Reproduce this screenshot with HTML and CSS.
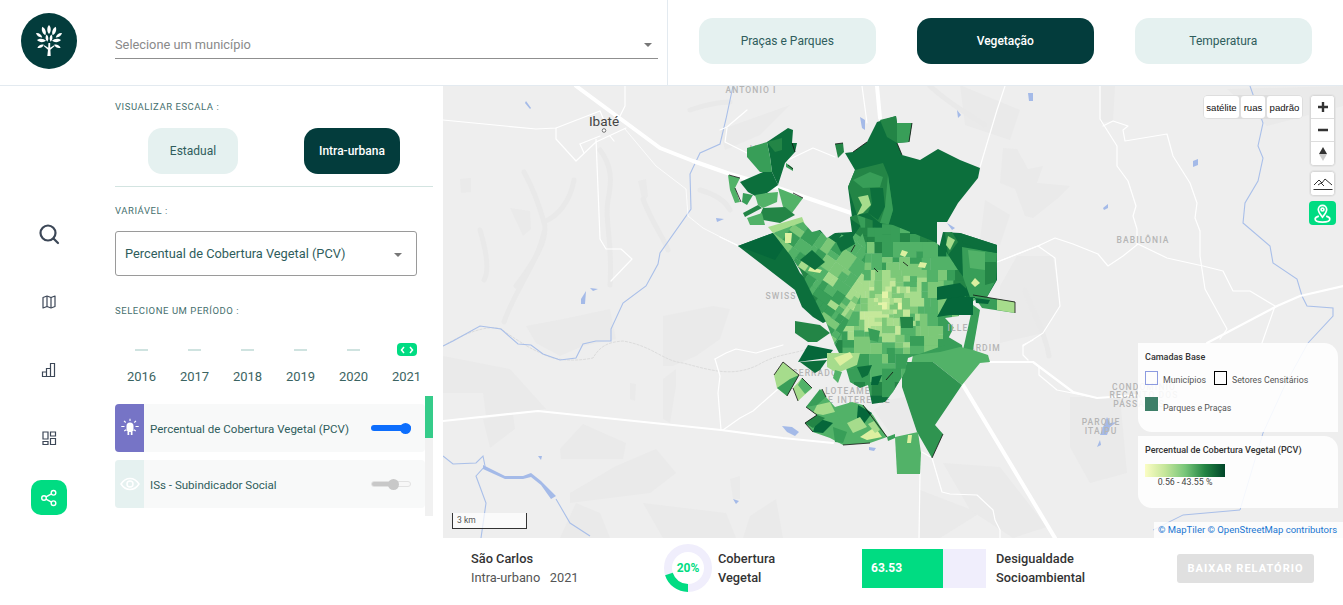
FILE: index.html
```html
<!DOCTYPE html>
<html lang="pt-BR">
<head>
<meta charset="utf-8">
<title>Vegetação - São Carlos</title>
<link rel="stylesheet" href="styles.css">
</head>
<body>
<div class="app">
  <header class="topbar">
    <div class="brand">
      <div class="logo">
        <svg viewBox="0 0 56 56" width="56" height="56" aria-hidden="true">
          <defs><path id="leaf" d="M0-5C2.300-2.500 2.300 1.500 0 4-2.300 1.500-2.300-2.500 0-5z"/></defs>
          <g fill="#fff">
            <path d="M26.300 43h3.400l-.3-6.300 4.300-3.700-.6-.8-3.900 2.600V30h-1.800l-.2 4.800-3.900-2.600-.6.8 4.300 3.700z"/>
            <use href="#leaf" transform="translate(28 17)"/>
            <use href="#leaf" transform="translate(23 18.500) rotate(-20)"/>
            <use href="#leaf" transform="translate(33 18.500) rotate(20)"/>
            <use href="#leaf" transform="translate(26 25.500) rotate(-6) scale(.8)"/>
            <use href="#leaf" transform="translate(30 25.500) rotate(6) scale(.8)"/>
            <use href="#leaf" transform="translate(18.500 22.500) rotate(-55) scale(.85)"/>
            <use href="#leaf" transform="translate(37.500 22.500) rotate(55) scale(.85)"/>
            <use href="#leaf" transform="translate(21 27.500) rotate(-85)"/>
            <use href="#leaf" transform="translate(35 27.500) rotate(85)"/>
            <use href="#leaf" transform="translate(20 33) rotate(-115) scale(.8)"/>
            <use href="#leaf" transform="translate(36 33) rotate(115) scale(.8)"/>
          </g>
        </svg>
      </div>
    </div>
    <div class="city-select">
      <span>Selecione um município</span>
      <i class="caret"></i>
    </div>
    <nav class="tabs">
      <button class="pill tab">Praças e Parques</button>
      <button class="pill tab active">Vegetação</button>
      <button class="pill tab">Temperatura</button>
    </nav>
  </header>

  <div class="content">
    <aside class="rail">
      <a class="rail-item">
        <svg width="24" height="24" viewBox="0 0 24 24" fill="none" stroke="#3c4757" stroke-width="2.200" stroke-linecap="round"><circle cx="11" cy="11" r="7.500"/><path d="M16.500 16.500 21 21"/></svg>
      </a>
      <a class="rail-item">
        <svg width="16" height="16" viewBox="0 0 16 16" fill="none" stroke="#3c4757" stroke-width="1.200" stroke-linejoin="round"><path d="M2 3.500 6 2l4 1.500L14 2v10.500L10 14l-4-1.500L2 14z"/><path d="M6 2v10.500M10 3.500V14"/></svg>
      </a>
      <a class="rail-item">
        <svg width="16" height="16" viewBox="0 0 16 16" fill="none" stroke="#3c4757" stroke-width="1.200"><path d="M1.500 10h4v4.500h-4zM5.500 6.500h4v8h-4zM9.500 1.500h4v13h-4z"/></svg>
      </a>
      <a class="rail-item">
        <svg width="16" height="16" viewBox="0 0 16 16" fill="none" stroke="#3c4757" stroke-width="1.200"><path d="M2 2h5v7H2zM9.500 2h5v4h-5zM2 11.500h5v3H2zM9.500 8.500h5v6h-5z"/></svg>
      </a>
      <a class="share-btn">
        <svg width="18" height="18" viewBox="0 0 18 18" fill="none" stroke="#fff" stroke-width="1.400"><circle cx="13.500" cy="3.800" r="2.300"/><circle cx="4" cy="9" r="2.300"/><circle cx="13.500" cy="14.200" r="2.300"/><path d="M6 7.900 11.500 4.900M6 10.100l5.500 3"/></svg>
      </a>
    </aside>

    <section class="panel">
      <h4 class="label first">VISUALIZAR ESCALA :</h4>
      <div class="scale-row">
        <button class="pill scale">Estadual</button>
        <button class="pill scale wide active">Intra-urbana</button>
      </div>
      <hr class="rule">
      <h4 class="label var">VARIÁVEL :</h4>
      <div class="var-select">
        <span>Percentual de Cobertura Vegetal (PCV)</span>
        <i class="caret"></i>
      </div>
      <h4 class="label period">SELECIONE UM PERÍODO :</h4>
      <div class="timeline">
        <div class="year"><i class="tick"></i><span>2016</span></div>
        <div class="year"><i class="tick"></i><span>2017</span></div>
        <div class="year"><i class="tick"></i><span>2018</span></div>
        <div class="year"><i class="tick"></i><span>2019</span></div>
        <div class="year"><i class="tick"></i><span>2020</span></div>
        <div class="year">
          <i class="chip"><svg width="14" height="8" viewBox="0 0 14 8" fill="none" stroke="#fff" stroke-width="1.500"><path d="M4 1 1.500 4 4 7M10 1l2.500 3L10 7"/></svg></i>
          <span>2021</span>
        </div>
      </div>
      <div class="layers">
        <div class="layer-list">
          <div class="layer">
            <div class="layer-icon bulb">
              <svg width="20" height="20" viewBox="0 0 20 20" fill="#fff"><path d="M6.500 8a3.500 3.500 0 0 1 7 0v5h-1v4h-1.700v-3H9.200v3H7.500v-4h-1z"/><path d="M10 .8V3M4 2.800l1.700 1.700M16 2.800l-1.700 1.700M1.300 8.500h3.200M15.500 8.500h3.200M4.300 13l1.700-1.300M15.700 13 14 11.700" stroke="#fff" stroke-width="1.100" fill="none"/></svg>
            </div>
            <span class="layer-name">Percentual de Cobertura Vegetal (PCV)</span>
            <div class="toggle on"><i></i></div>
          </div>
          <div class="layer">
            <div class="layer-icon eye">
              <svg width="20" height="14" viewBox="0 0 20 14" fill="none" stroke="#fff" stroke-width="1.500"><path d="M1 7c2.500-3.800 5.500-5.500 9-5.500s6.500 1.700 9 5.500c-2.500 3.800-5.500 5.500-9 5.500S3.500 10.800 1 7z"/><circle cx="10" cy="7" r="3"/></svg>
            </div>
            <span class="layer-name">ISs - Subindicador Social</span>
            <div class="toggle off"><i></i></div>
          </div>
        </div>
        <div class="scrollbar"><i></i></div>
      </div>
    </section>

    <main class="stage">
      <div class="map">
        <svg class="basemap" viewBox="443 86 900 452" preserveAspectRatio="none" aria-hidden="true">
          <rect class="land" x="443" y="86" width="900" height="452"/>
          <g class="terrain">
            <polygon points="563,319 610,309 616,339 583,346 560,356 536,343 526,326"/>
            <polygon points="443,356 510,369 546,409 486,416 483,393 443,393"/>
            <polygon points="483,419 513,414 515,429 490,448"/>
            <polygon points="583,424 626,443 623,459 561,459 560,449"/>
            <polygon points="616,466 656,449 676,473 650,493 570,503 570,493"/>
            <polygon points="576,503 600,513 610,538 560,538"/>
            <polygon points="643,503 726,513 736,538 663,538"/>
            <polygon points="730,479 740,476 740,499 733,499"/>
            <polygon points="750,516 776,499 783,538 743,538"/>
            <polygon points="663,316 713,306 730,309 720,339 696,356 673,366 663,366"/>
            <polygon points="630,383 636,384 635,401 630,399"/>
            <polygon points="663,379 676,369 676,386 670,423 663,419"/>
            <polygon points="510,208 530,211 531,229 523,236"/>
            <polygon points="460,179 471,178 471,192 461,193"/>
            <polygon points="638,181 646,179 648,196 643,203"/>
            <polygon points="1003,148 1017,149 1028,169 1043,166 1037,183 1070,186 1057,199 1033,218 1025,216 1015,189 1000,183"/>
            <polygon points="1100,86 1115,86 1113,121 1100,123"/>
            <polygon points="1227,89 1343,86 1343,106 1267,126"/>
            <polygon points="1017,256 1053,256 1060,306 1043,333 1000,343 1000,286"/>
            <polygon points="1070,397 1120,397 1127,473 1090,483 1070,447"/>
            <polygon points="920,490 980,513 940,538 920,538"/>
            <polygon points="943,463 1000,467 1047,527 1013,538 970,510"/>
            <polygon points="888,400 905,397 917,432 893,437 874,410"/>
            <polygon points="960,85 1020,110 1010,140 965,125"/>
            <polygon points="720,130 790,105 760,135 725,150"/>
            <polygon points="985,200 1010,215 1000,245 980,240"/>
          </g>
          <g class="valleys">
            <path d="M524 172C534 190 539 205 544 222S534 262 516 286"/>
            <path d="M544 222C558 216 570 202 574 180"/>
            <path d="M544 232C538 262 514 292 504 322"/>
            <path d="M643 199C653 225 665 240 668 250"/>
            <path d="M600 150C612 166 612 180 608 200S613 240 610 285"/>
            <path d="M700 190C714 194 725 200 730 210"/>
            <path d="M690 110C702 106 716 102 730 102"/>
            <path d="M1025 290C1031 310 1045 330 1049 356"/>
            <path d="M480 230C486 250 490 270 484 280"/>
            <path d="M930 86C945 100 960 110 985 125"/>
          </g>
          <path class="boundary" d="M443 346C463 334 488 324 501 329C521 343 531 349 543 354C553 360 573 362 593 358C601 344 611 342 623 341C653 346 663 361 683 363C713 371 733 377 758 365C778 353 793 355 813 347"/>
          <g class="water-line">
            <polyline points="733,86 726,119 720,144 700,153 690,174 691,209 660,253 658,264 646,286 623,303 611,329 611,341 596,341 583,344 576,358 560,360 543,354 531,345 518,344 501,329 480,326 453,341 443,346"/>
            <polyline points="443,456 453,464 476,463 483,456 485,466 476,476 486,503 481,538"/>
            <polyline points="556,499 570,523 590,536"/>
            <polyline points="1250,86 1263,123 1258,146 1263,158 1258,181 1245,203 1243,223 1270,246 1273,263 1297,279 1302,296 1307,306 1333,308 1333,316 1308,343"/>
          </g>
          <polyline class="water-faint" points="1308,343 1285,385 1263,433 1240,510 1183,515 1153,530"/>
          <g class="water">
            <polygon points="483,465 505,476 523,476 531,473 541,481 556,496 551,499 541,485 531,477 523,479 505,479 483,469"/>
            <polygon points="526,101 531,108 530,109 525,103"/>
            <polygon points="581,299 586,291 585,304 581,304"/>
            <polygon points="590,288 598,289 593,291"/>
            <polygon points="538,456 542,456 541,460"/>
            <polygon points="733,499 739,501 736,504"/>
            <polygon points="716,218 724,219 717,222"/>
            <polygon points="782,426 792,427 799,432 795,436 787,432"/>
            <polygon points="869,447 876,448 874,451 869,450"/>
            <polygon points="860,117 865,120 865,130 862,128"/>
            <polygon points="957,110 961,115 958,118"/>
            <polygon points="947,223 955,228 952,230"/>
            <polygon points="1028,93 1033,93 1033,101 1029,101"/>
            <polygon points="1193,161 1198,159 1198,165 1193,167"/>
            <polygon points="1103,208 1108,204 1108,208 1104,210"/>
            <polygon points="1107,417 1110,423 1117,422 1110,427 1107,435 1100,435"/>
            <polygon points="1100,440 1101,445 1097,447"/>
          </g>
          <g class="road major">
            <polyline points="576,86 660,148 693,161 730,174 778,188 857,215"/>
            <polyline points="963,385 1055,538"/>
            <polyline points="877,86 880,118"/>
          </g>
          <g class="road medium">
            <polyline points="443,421 538,411 721,430 783,438 833,443"/>
            <polyline points="990,362 1033,362 1073,392 1097,398 1140,395"/>
            <polyline points="1207,343 1277,306 1300,296 1343,286"/>
          </g>
          <g class="road minor">
            <polyline points="443,120 536,129 556,128 600,111"/>
            <polyline points="556,128 556,139 576,161 596,142 626,128"/>
            <polyline points="580,144 600,136"/>
            <polyline points="580,144 584,153"/>
            <polyline points="596,139 600,239 606,249 621,249 632,259 611,281"/>
            <polyline points="625,86 625,106 620,116"/>
            <polyline points="600,111 606,125"/>
            <polyline points="610,136 614,141"/>
            <polyline points="1039,367 1039,375 1057,390 1097,398"/>
            <polyline points="1033,340 1023,345 1023,355 1028,360"/>
            <polyline points="922,452 932,458 942,492 950,494 977,495 993,510 995,520 1000,530 1000,538"/>
            <polyline points="920,473 919,538"/>
            <polyline points="715,359 720,376 718,393 721,430"/>
            <polyline points="715,359 726,353 736,349 756,353 783,345"/>
            <polyline points="723,430 740,418 753,411 778,389"/>
            <polyline points="862,86 867,123"/>
            <polyline points="980,167 997,110 1005,86"/>
            <polyline points="997,262 1040,245"/>
            <polyline points="720,130 727,127 747,110"/>
            <polyline points="727,128 725,142 747,153"/>
            <polyline points="788,160 813,148 835,157"/>
            <polyline points="720,237 737,245"/>
            <polyline points="1000,261 1038,246 1055,238 1073,244 1098,254 1108,266 1123,256 1138,244 1167,258 1203,266 1223,271 1233,291 1250,291 1275,306"/>
            <polyline points="1100,86 1100,119 1117,146 1117,166 1128,181 1136,206 1133,216 1137,229 1137,244"/>
            <polyline points="1103,126 1113,121 1128,126 1123,130 1125,141 1167,134 1173,156 1190,183 1197,203 1195,218 1200,231 1200,256 1205,289 1227,329 1220,339"/>
            <polyline points="1038,246 1055,258 1060,306 1043,333 1023,346"/>
            <polyline points="1275,306 1262,343"/>
          </g>
          <polyline class="road-thin" points="625,129 656,166 686,189 688,216 703,228 738,246"/>
          <circle class="place-dot" cx="604" cy="130.500" r="1.800"/>
          <text class="place" x="604" y="126">Ibaté</text>
          <text class="hood" x="751" y="93">ANTONIO I</text>
          <text class="hood" x="766" y="152">JARDIM</text>
          <text class="hood" x="781" y="299">SWISS</text>
          <text class="hood" x="1143" y="243">BABILÔNIA</text>
          <text class="hood" x="1101" y="425">PARQUE</text>
          <text class="hood" x="1101" y="434">ITAIPU</text>
          <text class="hood" x="1144" y="390">CONDOMÍNIO</text>
          <text class="hood" x="1144" y="398">RECANTO DOS</text>
          <text class="hood" x="1139" y="407">PÁSSAROS</text>
          <text class="hood" x="858" y="394">LOTEAMENTO</text>
          <text class="hood" x="856" y="403">DE INTERESSE</text>
          <text class="hood" x="815" y="376">CERRADO</text>
          <text class="hood" x="982" y="351">JARDIM</text>

          <g class="tract-base">
            <polygon class="c1" points="867,142 877,122 896,116 897,123 912,123 909,142 897,143 902,155 920,160 938,149 960,160 980,168 978,178 958,203 947,222 937,222 937,242 935,255 855,240 848,187 855,170 845,153 853,152"/>
            <polygon class="c2" points="880,120 896,116 897,123 897,143 887,137"/>
            <polygon class="c3" points="897,123 912,123 909,142 897,143"/>
            <polygon class="c2" points="835,144 843,143 844,152 838,158"/>
            <polygon class="c2" points="848,187 855,170 883,163 888,175 893,210 887,230 880,223 868,213 857,215"/>
            <polygon class="c3" points="853,180 870,172 883,177 880,187 863,188"/>
            <polygon class="c1" points="870,188 883,188 885,207 878,220 868,213 872,203"/>
            <polygon class="c5" points="858,197 868,195 871,205 863,213 857,215 862,205"/>
            <polygon class="c3" points="888,175 893,210 887,230 880,223 885,207"/>

            <polygon class="c1" points="767,142 788,128 793,130 792,143 797,143 795,152 785,163 778,185 772,172 770,157"/>
            <polygon class="c2" points="767,142 782,138 782,150 775,152"/>
            <polygon class="c3" points="747,148 767,142 770,157 772,172 760,172 747,157"/>
            <polygon class="c1" points="740,182 763,172 772,172 778,185 767,193 757,197 748,192"/>
            <polygon class="c4" points="728,175 740,178 735,188 740,202 735,203 730,190"/>
            <polygon class="c3" points="743,193 753,195 747,205 742,202"/>
            <polygon class="c4" points="755,195 767,193 778,192 777,202 763,208 758,205"/>
            <polygon class="c4" points="778,188 803,198 792,213 783,207"/>
            <polygon class="c2" points="763,208 785,207 795,215 780,223 763,220 760,215"/>
            <polygon class="c2" points="743,213 758,205 762,208 745,217"/>
            <polygon class="c4" points="747,218 762,213 765,225 750,225"/>
            <polygon class="c5" points="768,227 802,217 805,225 773,233"/>
            <polygon class="c3" points="786,163 793,168 793,171 786,167"/>

            <polygon class="c1" points="738,246 773,233 787,242 792,257 800,273 815,287 837,290 845,292 850,310 823,323 813,317 802,307 795,290"/>
            <polygon class="c0" points="738,246 773,233 785,245 775,260"/>

            <polygon class="c1" points="943,232 960,233 997,245 997,280 987,297 973,298 973,315 950,315 937,305 935,265"/>
            <polygon class="c2" points="945,233 952,232 958,242 948,255"/>
            <polygon class="c5" points="948,236 955,240 950,250 946,245"/>

            <polygon class="c3" points="973,295 1015,302 1015,313 982,308"/>
            <polygon class="c5" points="997,299 1015,302 1015,313 997,310"/>
            <polygon class="c0" points="975,298 990,300 988,304 976,303"/>
            <polygon class="c3" points="973,305 980,310 972,355 967,357 963,350"/>
            <polygon class="c3" points="913,340 945,335 962,345 963,352 915,358"/>

            <polygon class="c4" points="913,355 940,352 960,347 973,350 988,355 990,362 980,363 962,385 933,362 910,370"/>
            <polygon class="c2b" points="902,377 907,362 933,362 962,385 935,425 943,434 932,458 917,432 902,387"/>
            <polygon class="c4" points="895,437 918,432 921,453 920,474 897,474"/>
            <polygon class="c6" points="908,435 912,435 911,443 907,443"/>

            <polygon class="c5" points="783,362 799,375 787,396 777,388 774,375"/>
            <polygon class="c3" points="790,379 799,375 787,396 777,388"/>
            <polygon class="c5" points="802,378 812,388 798,401 793,388"/>
            <polygon class="c4" points="802,378 812,388 805,394 798,385"/>

            <polygon class="c4" points="822,389 826,397 835,407 852,402 863,405 873,415 887,437 870,443 843,445 830,438 813,432 805,423 817,415 806,407"/>
            <polygon class="c3" points="820,389 826,397 817,405 806,407"/>
            <polygon class="c5" points="817,405 830,402 835,412 823,415 813,413"/>
            <polygon class="c4" points="850,402 858,410 843,425 837,415"/>
            <polygon class="c0" points="858,405 872,413 863,425 857,418"/>
            <polygon class="c0" points="817,418 833,423 823,433 813,432"/>
            <polygon class="c2" points="805,423 817,415 825,418 813,428"/>
            <polygon class="c3" points="833,427 847,432 843,443 835,442"/>
            <polygon class="c6" points="860,437 875,427 882,437 867,440"/>
            <polygon class="c5" points="847,423 860,417 867,427 853,433"/>
            <polygon class="c5" points="868,424 874,421 880,430 875,433"/>
            <polygon class="c3" points="887,437 895,434 895,438 888,441"/>
          </g>

          <defs>
            <clipPath id="core-clip">
              <polygon points="850,217 857,215 880,223 893,225 935,242 945,250 958,270 975,292 975,300 962,308 955,325 945,345 925,352 908,358 905,372 893,392 885,402 872,404 868,385 860,388 850,382 845,365 835,345 845,325 862,290 865,245"/>
            </clipPath>
            <clipPath id="west-clip">
              <polygon points="773,233 803,222 812,232 820,230 827,238 835,233 852,232 850,217 857,215 866,245 863,290 846,326 835,345 826,322 815,300 800,270 790,255"/>
            </clipPath>
          </defs>
          <g id="tracts" clip-path="url(#core-clip)"></g>
          <g clip-path="url(#west-clip)"><g id="tracts-west" transform="rotate(35 830 280)"></g></g>

          <g class="tract-over">
            <polygon class="c2" points="900,317 913,317 913,328 901,328"/>
            <polygon class="c3" points="868,328 880,331 878,342 870,340"/>
            <polygon class="c1" points="857,367 872,365 868,375 862,378"/>
            <polygon class="c0" points="872,377 882,375 878,385 871,385"/>
            <polygon class="c2" points="795,321 820,325 830,333 817,342 808,342 795,333"/>
            <polygon class="c0" points="808,345 833,350 827,358 798,362"/>
            <polygon class="c1" points="800,362 827,360 820,370 815,373"/>
            <polygon class="c5" points="827,353 860,353 857,365 837,373 827,367"/>
            <polygon class="c6" points="834,358 850,352 853,357 840,366"/>
            <polygon class="c4" points="835,370 842,372 838,383 833,378"/>
            <polygon class="c0" points="937,317 950,293 973,298 973,315 950,315"/>
            <polygon class="c0" points="937,287 960,283 973,295 937,300"/>
            <polygon class="c3" points="962,247 997,253 996,280 987,297 970,297 963,277"/>
            <polygon class="c4" points="968,250 985,252 985,270 970,268"/>
            <polygon class="c1" points="960,233 997,245 997,253 980,250 963,243"/>
            <polygon class="c2" points="985,262 996,262 996,282 985,285"/>
            <polygon class="c6" points="975,278 980,283 975,287 971,283"/>
            <polygon class="c6" points="785,233 792,233 791,243 785,243"/>
            <polygon class="c6" points="810,267 822,270 820,273 808,271"/>
            <polygon class="c6" points="920,262 927,263 925,268 918,267"/>
            <polygon class="c6" points="902,250 908,252 905,257 900,255"/>
            <polygon class="c1" points="800,260 812,250 825,262 815,270"/>
            <polygon class="c1" points="835,240 851,232 855,244 841,252"/>
            <polygon class="land-cut" points="945,318 967,315 968,328 958,332"/>
          </g>
          <text class="hood" x="958" y="331">ILLE</text>
          <g class="tract-edge">
            <path d="M795 152 792 143M793 169 788 165M729 175 740 178M741 202 735 188M803 198 793 193M843 143 835 144M853 152 867 142M912 123 909 142M897 143 902 155"/>
            <path d="M774 375 783 362 799 375M799 375 787 396M802 378 812 388M793 388 798 401"/>
            <path d="M822 389 826 397M806 407 817 415 805 423 813 432M863 405 887 437M843 445 870 443"/>
            <path d="M943 434 932 458M886 380 893 372M1015 302V313M973 295 1015 302"/>
            <path d="M855 245 851 252M903 262 908 266M874 268 878 272"/>
          </g>
        </svg>

        <div class="styles-ctrl">
          <button class="s-wide">satélite</button>
          <button class="s-narrow">ruas</button>
          <button class="s-wide">padrão</button>
        </div>
        <div class="map-ctrls">
          <div class="ctrl-group">
            <button class="zoom-btn">
              <svg width="12" height="12" viewBox="0 0 12 12" fill="#333"><path d="M4.800 1h2.400v3.800H11v2.400H7.200V11H4.800V7.200H1V4.800h3.800z"/></svg>
            </button>
            <button class="zoom-btn">
              <svg width="12" height="12" viewBox="0 0 12 12" fill="#333"><path d="M1 4.800h10v2.400H1z"/></svg>
            </button>
            <button class="zoom-btn">
              <svg width="12" height="18" viewBox="0 0 12 18"><path d="M6 2l4 7H2z" fill="#333"/><path d="M6 16 2 9h8z" fill="#ccc"/></svg>
            </button>
          </div>
          <div class="ctrl-group">
            <button class="zoom-btn">
              <svg width="20" height="14" viewBox="0 0 20 14" fill="none" stroke="#333" stroke-width="1"><path d="M1 8l5-5 3 3 3-4 7 6"/><path d="M5 8l3-2 3 3"/><path d="M.5 12.500h19" stroke-width="1.200"/></svg>
            </button>
          </div>
          <button class="geo-btn">
            <svg width="19" height="21" viewBox="0 0 18 20" fill="none" stroke="#fff" stroke-width="1.600"><path d="M9 13.500C6 10 5 8.300 5 6.300a4 4 0 0 1 8 0c0 2-1 3.700-4 7.200z"/><circle cx="9" cy="6.200" r="1.400"/><path d="M5.500 12.500C3 13.300 2 14.300 2 15.300c0 1.700 3 2.900 7 2.900s7-1.200 7-2.900c0-1-1-2-3.500-2.800"/></svg>
          </button>
        </div>

        <div class="legend base-legend">
          <h5>Camadas Base</h5>
          <div class="legend-row">
            <span class="legend-item"><i class="swatch muni"></i><em>Municípios</em></span>
            <span class="legend-item"><i class="swatch setor"></i><em>Setores Censitários</em></span>
          </div>
          <div class="legend-row next">
            <span class="legend-item"><i class="swatch parque"></i><em>Parques e Praças</em></span>
          </div>
        </div>
        <div class="legend ramp-legend">
          <h5>Percentual de Cobertura Vegetal (PCV)</h5>
          <div class="ramp"></div>
          <div class="ramp-text">0.56 - 43.55 %</div>
        </div>
        <div class="scale-bar">3 km</div>
        <div class="attrib">© MapTiler © OpenStreetMap contributors</div>
      </div>

      <footer class="summary">
        <div class="sum-place">
          <strong>São Carlos</strong>
          <span>Intra-urbano &nbsp; 2021</span>
        </div>
        <div class="donut">
          <svg width="48" height="48" viewBox="0 0 48 48" fill="none" stroke-width="8">
            <circle cx="24" cy="24" r="20" stroke="#f0eefc"/>
            <circle cx="24" cy="24" r="20" stroke="#00dc82" stroke-dasharray="25.100 125.700" transform="rotate(90 24 24)"/>
          </svg>
          <b>20%</b>
        </div>
        <div class="sum-cover"><strong>Cobertura</strong><strong>Vegetal</strong></div>
        <div class="bar"><b>63.53</b></div>
        <div class="sum-ineq"><strong>Desigualdade</strong><strong>Socioambiental</strong></div>
        <button class="report">BAIXAR RELATÓRIO</button>
      </footer>
    </main>
  </div>
</div>
<script src="app.js"></script>
</body>
</html>
```

FILE: styles.css
```css
* { box-sizing: border-box; }
html, body { margin: 0; padding: 0; background: #fff; }
body { font-family: Roboto, "Liberation Sans", sans-serif; color: #2f5d5c; overflow: hidden; }
button { font-family: inherit; border: 0; padding: 0; cursor: pointer; }
h4, h5 { margin: 0; font-weight: 400; }

.app { width: 1343px; height: 605px; display: flex; flex-direction: column; overflow: hidden; }

/* top bar */
.topbar { height: 86px; display: flex; border-bottom: 1px solid #e3eaf0; flex: none; }
.brand { width: 115px; padding: 13px 0 0 21px; flex: none; }
.logo { width: 56px; height: 56px; border-radius: 50%; background: #033c3c; }
.logo svg { display: block; }
.city-select { width: 543px; height: 59px; padding: 37px 6px 0 0; border-bottom: 1px solid #8f8f8f; display: flex; justify-content: space-between; font-size: 12.800px; line-height: 15px; color: #8a8a8a; }
.caret { width: 0; height: 0; border-left: 4px solid transparent; border-right: 4px solid transparent; border-top: 4px solid #777; margin-top: 6px; display: block; }
.tabs { margin-left: 9px; flex: 1; border-left: 1px solid #e3eaf0; padding: 18px 0 0 31px; display: flex; gap: 41.500px; align-items: flex-start; }
.pill { background: #e5f1f0; color: #2f5d5c; border-radius: 14px; font-size: 12px; height: 46px; }
.pill.active { background: #033c3c; color: #fff; font-weight: 500; }
.tab { width: 176.500px; }

/* body */
.content { flex: 1; display: flex; min-height: 0; }
.rail { width: 115px; flex: none; display: flex; flex-direction: column; align-items: center; padding: 114px 17px 0 0; }
.rail-item { height: 68px; width: 36px; display: flex; align-items: center; justify-content: center; }
.share-btn { width: 36px; height: 35px; margin-top: 8px; border-radius: 10px; background: #00dc82; display: flex; align-items: center; justify-content: center; }

.panel { width: 318px; flex: none; margin-right: 10px; }
.label { font-size: 9.500px; line-height: 13px; letter-spacing: .55px; color: #45706e; }
.label.first { margin-top: 14px; }
.label.var { margin-top: 17px; }
.label.period { margin-top: 28px; }
.scale-row { display: flex; gap: 66px; margin-top: 15px; padding-left: 33px; }
.scale { width: 90px; }
.scale.wide { width: 96px; }
.rule { border: 0; height: 1px; background: #d3e4e1; margin: 12px 0 0; }
.var-select { width: 302px; height: 45px; margin-top: 14px; border: 1px solid #9a9a9a; border-radius: 3px; padding: 14px 14px 0 9px; display: flex; justify-content: space-between; font-size: 12.800px; line-height: 16px; color: #2f5d5c; }
.var-select .caret { margin-top: 7px; }
.timeline { display: flex; margin-top: 26px; }
.year { width: 53px; display: flex; flex-direction: column; align-items: center; font-size: 13px; line-height: 16px; color: #3b6462; }
.year span { margin-top: 13px; }
.tick { width: 13px; height: 2px; background: #cfe3e0; margin-top: 6px; margin-bottom: 5px; display: block; }
.chip { width: 20px; height: 13px; border-radius: 4px; background: #00dc82; display: flex; align-items: center; justify-content: center; }
.layers { display: flex; margin-top: 11px; height: 120px; }
.layer-list { width: 310px; padding-top: 8px; display: flex; flex-direction: column; gap: 8px; }
.layer { height: 48px; background: #f8f9f9; border-radius: 4px; display: flex; align-items: center; overflow: hidden; }
.layer-icon { width: 29px; height: 48px; display: flex; align-items: center; justify-content: center; flex: none; }
.bulb { background: #7674c6; }
.eye { background: #e5f1f0; }
.layer-name { margin-left: 6px; padding-top: 1px; font-size: 11.550px; flex: 1; color: #2f5d5c; }
.toggle { width: 40px; height: 6px; border-radius: 3px; margin-right: 14px; position: relative; flex: none; }
.toggle i { position: absolute; width: 11px; height: 11px; border-radius: 50%; top: -2.500px; display: block; }
.toggle.on { background: #0d6efd; }
.toggle.on i { background: #0d6efd; right: 0; }
.toggle.off { background: linear-gradient(90deg, #c8c8c8 55%, #f7f7f7 55%); border: 1px solid #e2e2e2; }
.toggle.off i { background: #c8c8c8; left: 16px; top: -3.500px; }
.scrollbar { width: 8px; background: #f1f1f1; }
.scrollbar i { display: block; height: 42px; background: #35cc8a; }

/* map */
.stage { flex: 1; display: flex; flex-direction: column; min-width: 0; }
.map { height: 452px; position: relative; overflow: hidden; flex: none; }
.basemap { display: block; width: 900px; height: 452px; }
.land, .land-cut { fill: #eeeeee; }
.terrain polygon { fill: #eaeaea; }
.valleys path { fill: none; stroke: #e9e9e9; stroke-width: 5; stroke-linecap: round; }
.boundary { fill: none; stroke: #dcdcdc; stroke-width: 1; stroke-dasharray: 3 1; }
.water-line polyline { fill: none; stroke: #a9bfe9; stroke-width: 1.100; }
.water-faint { fill: none; stroke: #a9bfe9; stroke-width: 1; }
.water polygon { fill: #a4bae8; }
.road polyline { fill: none; stroke: #fff; stroke-linejoin: round; stroke-linecap: round; }
.road.major polyline { stroke-width: 4; }
.road.medium polyline { stroke-width: 2.200; }
.road.minor polyline { stroke-width: 1.200; }
.road-thin { fill: none; stroke: #fff; stroke-width: .8; }
.place { font: 400 13.500px Roboto, sans-serif; fill: #444; text-anchor: middle; }
.place-dot { fill: #fff; stroke: #555; stroke-width: .8; }
.hood { font: 500 8.500px Roboto, sans-serif; fill: #b5b5b5; letter-spacing: 1.100px; text-anchor: middle; }
.tract-edge path { fill: none; stroke: #111; stroke-width: .8; }
.c0 { fill: #05673a; }
.c1 { fill: #0c6f3c; }
.c2 { fill: #238546; }
.c2b { fill: #2f9450; }
.c3 { fill: #389e58; }
.c4 { fill: #52b268; }
.c5 { fill: #a6dc8c; }
.c6 { fill: #dcf0a0; }

.styles-ctrl { position: absolute; left: 760px; top: 9px; display: flex; gap: 2px; padding: 1px; border-radius: 5px; background: #dedede; }
.styles-ctrl button { height: 22px; background: #fff; border-radius: 3px; font: 9.600px "Liberation Sans", sans-serif; color: #111; }
.s-wide { width: 35px; }
.s-narrow { width: 24px; }
.map-ctrls { position: absolute; left: 866px; top: 9px; width: 27px; display: flex; flex-direction: column; align-items: center; gap: 5px; }
.ctrl-group { width: 25px; border: 1px solid #d8d8d8; border-radius: 4px; background: #fff; box-shadow: 0 0 0 1px #e4e4e4; overflow: hidden; }
.zoom-btn { width: 23px; height: 23px; background: #fff; display: flex; align-items: center; justify-content: center; border-bottom: 1px solid #ddd; }
.zoom-btn:last-child { border-bottom: 0; }
.geo-btn { width: 27px; height: 24px; background: #00dc82; border-radius: 4px; display: flex; align-items: center; justify-content: center; }
.legend { position: absolute; left: 695px; width: 200px; background: rgba(255,255,255,.88); border-radius: 0 14px 0 14px; padding: 9px 7px; font-size: 8.800px; color: #333; }
.legend h5 { font-size: 9px; line-height: 11px; font-weight: 500; color: #333; }
.base-legend { top: 257px; height: 89px; }
.ramp-legend { top: 350px; height: 72px; }
.legend-row { display: flex; gap: 8px; margin-top: 8px; }
.legend-row.next { margin-top: 12px; }
.legend-item { display: flex; align-items: flex-end; line-height: 10px; color: #555; }
.legend-item em { font-style: normal; }
.legend-row.next em { position: relative; top: 2px; }
.swatch { width: 13px; height: 14px; margin-right: 5px; display: block; }
.muni { border: 1px solid #8c9be0; }
.setor { border: 1px solid #000; }
.parque { background: #3e7f68; }
.ramp { width: 80px; height: 13px; margin-top: 8px; background: linear-gradient(90deg, #fbfdc4, #c5e69a 25%, #78c679 50%, #238443 75%, #004529); }
.ramp-text { width: 80px; text-align: center; line-height: 11px; color: #444; }
.scale-bar { position: absolute; left: 9px; bottom: 9px; width: 75px; height: 16px; border: 1px solid #333; border-top: 0; background: rgba(255,255,255,.7); font-size: 8.500px; line-height: 14px; padding-left: 4px; color: #555; }
.attrib { position: absolute; right: 0; bottom: 0; width: 189px; height: 16px; background: rgba(255,255,255,.8); padding-left: 4px; font: 9.500px/16px Roboto, sans-serif; color: #1976d2; white-space: nowrap; }

/* footer */
.summary { flex: 1; display: flex; align-items: flex-start; padding-left: 28px; font-size: 12.800px; line-height: 19px; }
.summary strong { display: block; font-weight: 500; color: #333; }
.summary span { display: block; color: #555; }
.sum-place { width: 193px; margin-top: 11px; }
.donut { width: 48px; height: 48px; margin-top: 6px; position: relative; flex: none; }
.donut svg { display: block; }
.donut b { position: absolute; left: 0; right: 0; top: 0; text-align: center; line-height: 48px; font-size: 12px; font-weight: 700; color: #00dc82; }
.sum-cover { width: 144px; margin: 11px 0 0 6px; }
.bar { width: 124px; height: 39px; margin-top: 11px; background: linear-gradient(90deg, #00dc82 81px, #f0eefc 81px); color: #fff; line-height: 39px; padding-left: 9px; flex: none; font-size: 12px; }
.sum-ineq { width: 181px; margin: 11px 0 0 10px; }
.report { width: 137px; height: 29px; margin-top: 16px; background: #e0e0e0; color: #fff; border-radius: 3px; font-size: 11px; font-weight: 700; letter-spacing: 1px; }
```

FILE: app.js
```js
// Census-tract mosaic of the choropleth: a seeded subdivision coloured by a radial field.
var NS = 'http://www.w3.org/2000/svg';
var ramp = ['#0c6f3c', '#238546', '#389e58', '#52b268', '#7cc878', '#a6dc8c', '#c5e89a', '#e4f4a8'];
var seed = 4242;
function rnd() { seed = (seed * 16807) % 2147483647; return seed / 2147483647; }

function field(x, y) {
  var d = Math.sqrt(Math.pow((x - 885) / 85, 2) + Math.pow((y - 305) / 72, 2));
  var vx = 70, vy = 50, len = Math.sqrt(vx * vx + vy * vy);
  var off = Math.abs((x - 790) * vy - (y - 235) * vx) / len;
  var ridge = off < 18 ? 3.4 : 0;
  return { d: d, v: Math.max(6 - 4.4 * d, ridge) };
}

// toWorld maps a cell's local centre to map coordinates, for rotated blocks.
function fill(host, x0, x1, y0, y1, toWorld) {
  function leaf(x, y, w, h) {
    var c = toWorld(x + w / 2, y + h / 2);
    var i = Math.round(field(c[0], c[1]).v + (rnd() - 0.5) * 2.8);
    i = Math.max(0, Math.min(7, i));
    var r = document.createElementNS(NS, 'rect');
    r.setAttribute('x', x);
    r.setAttribute('y', y);
    r.setAttribute('width', w + 0.4);
    r.setAttribute('height', h + 0.4);
    r.setAttribute('fill', ramp[i]);
    host.appendChild(r);
  }
  function split(x, y, w, h) {
    var c = toWorld(x + w / 2, y + h / 2);
    var min = 6 + Math.min(field(c[0], c[1]).d, 1.3) * 8;
    var m = Math.max(w, h);
    if (m < min || (m < min * 1.6 && rnd() < 0.3)) { leaf(x, y, w, h); return; }
    var t = 0.35 + rnd() * 0.3;
    if (w > h) { split(x, y, w * t, h); split(x + w * t, y, w * (1 - t), h); }
    else { split(x, y, w, h * t); split(x, y + h * t, w, h * (1 - t)); }
  }
  for (var x = x0; x < x1; x += 28) {
    for (var y = y0; y < y1; y += 28) { split(x, y, 28, 28); }
  }
}

fill(document.getElementById('tracts'), 826, 980, 214, 410, function (x, y) { return [x, y]; });

var a = 35 * Math.PI / 180;
fill(document.getElementById('tracts-west'), 740, 920, 190, 370, function (x, y) {
  var dx = x - 830, dy = y - 280;
  return [830 + dx * Math.cos(a) - dy * Math.sin(a), 280 + dx * Math.sin(a) + dy * Math.cos(a)];
});
```
